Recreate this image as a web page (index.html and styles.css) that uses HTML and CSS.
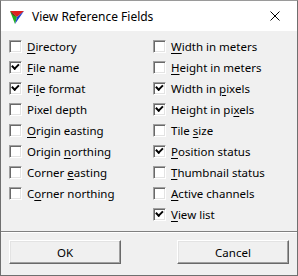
FILE: index.html
```html
<!DOCTYPE html>
<html lang="en">
<head>
    <meta charset="UTF-8">
    <title>View Reference Fields</title>
    <link rel="stylesheet" href="styles.css">
</head>
<body>
    <div class="window">
        <div class="title-bar">
            <svg class="app-icon" width="16" height="16" viewBox="0 0 16 16">
                <polygon points="1,2 15,2 8,8" fill="#e02020"/>
                <polygon points="1,2 8,8 6,15" fill="#20b020"/>
                <polygon points="15,2 8,8 6,15" fill="#2040d0"/>
                <polygon points="1,2 4,6 8,8" fill="#a00020"/>
            </svg>
            <span class="title">View Reference Fields</span>
            <span class="close">
                <svg width="10" height="10" viewBox="0 0 10 10">
                    <path d="M0.5 0.5 L9.5 9.5 M9.5 0.5 L0.5 9.5" stroke="#000" stroke-width="1"/>
                </svg>
            </span>
        </div>

        <div class="content">
            <div class="fields">
                <label class="check"><span class="box"></span><span><u>D</u>irectory</span></label>
                <label class="check"><span class="box"></span><span><u>W</u>idth in meters</span></label>

                <label class="check"><span class="box checked"></span><span><u>F</u>ile name</span></label>
                <label class="check"><span class="box"></span><span><u>H</u>eight in meters</span></label>

                <label class="check"><span class="box checked"></span><span>Fi<u>l</u>e format</span></label>
                <label class="check"><span class="box checked"></span><span>Width in <u>p</u>ixels</span></label>

                <label class="check"><span class="box"></span><span>Pixel depth</span></label>
                <label class="check"><span class="box checked"></span><span>Height in pi<u>x</u>els</span></label>

                <label class="check"><span class="box"></span><span><u>O</u>rigin easting</span></label>
                <label class="check"><span class="box"></span><span>Tile <u>s</u>ize</span></label>

                <label class="check"><span class="box"></span><span>Origin <u>n</u>orthing</span></label>
                <label class="check"><span class="box checked"></span><span><u>P</u>osition status</span></label>

                <label class="check"><span class="box"></span><span>Corner <u>e</u>asting</span></label>
                <label class="check"><span class="box"></span><span><u>T</u>humbnail status</span></label>

                <label class="check"><span class="box"></span><span>C<u>o</u>rner northing</span></label>
                <label class="check"><span class="box"></span><span><u>A</u>ctive channels</span></label>

                <span class="check"></span>
                <label class="check"><span class="box checked"></span><span><u>V</u>iew list</span></label>
            </div>

            <div class="separator"></div>

            <div class="buttons">
                <button class="btn">OK</button>
                <button class="btn">Cancel</button>
            </div>
        </div>
    </div>
</body>
</html>
```

FILE: styles.css
```css
* {
    margin: 0;
    padding: 0;
    box-sizing: border-box;
}

body {
    width: 298px;
    height: 276px;
    overflow: hidden;
    font-family: 'Noto Sans', 'Open Sans', sans-serif;
    font-size: 11.5px;
    color: #000;
    background: #f0f0f0;
}

.window {
    width: 298px;
    height: 276px;
    border: 1px solid #6f6f6f;
    border-top-color: #9a9a9a;
    background: #f0f0f0;
    display: flex;
    flex-direction: column;
}

.title-bar {
    height: 30px;
    background: #fff;
    display: flex;
    align-items: center;
    padding-left: 8px;
}

.app-icon {
    margin-right: 7px;
    margin-top: 1px;
}

.title {
    flex: 1;
    font-size: 12px;
    margin-top: 1px;
}

.close {
    width: 46px;
    height: 30px;
    display: flex;
    align-items: center;
    justify-content: center;
    margin-right: -1px;
}

.content {
    flex: 1;
    display: flex;
    flex-direction: column;
    padding: 5px 8px 0 8px;
}

.fields {
    display: grid;
    grid-template-columns: 144px 1fr;
    grid-auto-rows: 21px;
}

.check {
    display: flex;
    align-items: center;
    gap: 5px;
    height: 21px;
    white-space: nowrap;
}

.check u {
    text-decoration-thickness: 1px;
    text-underline-offset: 2px;
}

.box {
    width: 13px;
    height: 13px;
    flex: none;
    background: #fff;
    border-top: 1px solid #a0a0a0;
    border-left: 1px solid #a0a0a0;
    border-right: 1px solid #fff;
    border-bottom: 1px solid #fff;
    box-shadow: inset 1px 1px 0 #696969, inset -1px -1px 0 #e3e3e3;
    position: relative;
}

.box.checked::after {
    content: '';
    position: absolute;
    left: 3px;
    top: 2px;
    width: 5px;
    height: 3px;
    border-left: 2px solid #000;
    border-bottom: 2px solid #000;
    transform: rotate(-45deg);
    transform-origin: 30% 70%;
}

.separator {
    margin: 6px -8px 0 -8px;
    height: 2px;
    border-top: 1px solid #808080;
    border-bottom: 1px solid #fff;
}

.buttons {
    display: flex;
    justify-content: space-between;
    padding-top: 7px;
}

.btn {
    width: 112px;
    height: 24px;
    font-family: inherit;
    font-size: 11.5px;
    background: #f0f0f0;
    border-top: 1px solid #fff;
    border-left: 1px solid #fff;
    border-right: 1px solid #696969;
    border-bottom: 1px solid #696969;
    box-shadow: inset -1px -1px 0 #a0a0a0, inset 1px 1px 0 #e3e3e3;
}
```
